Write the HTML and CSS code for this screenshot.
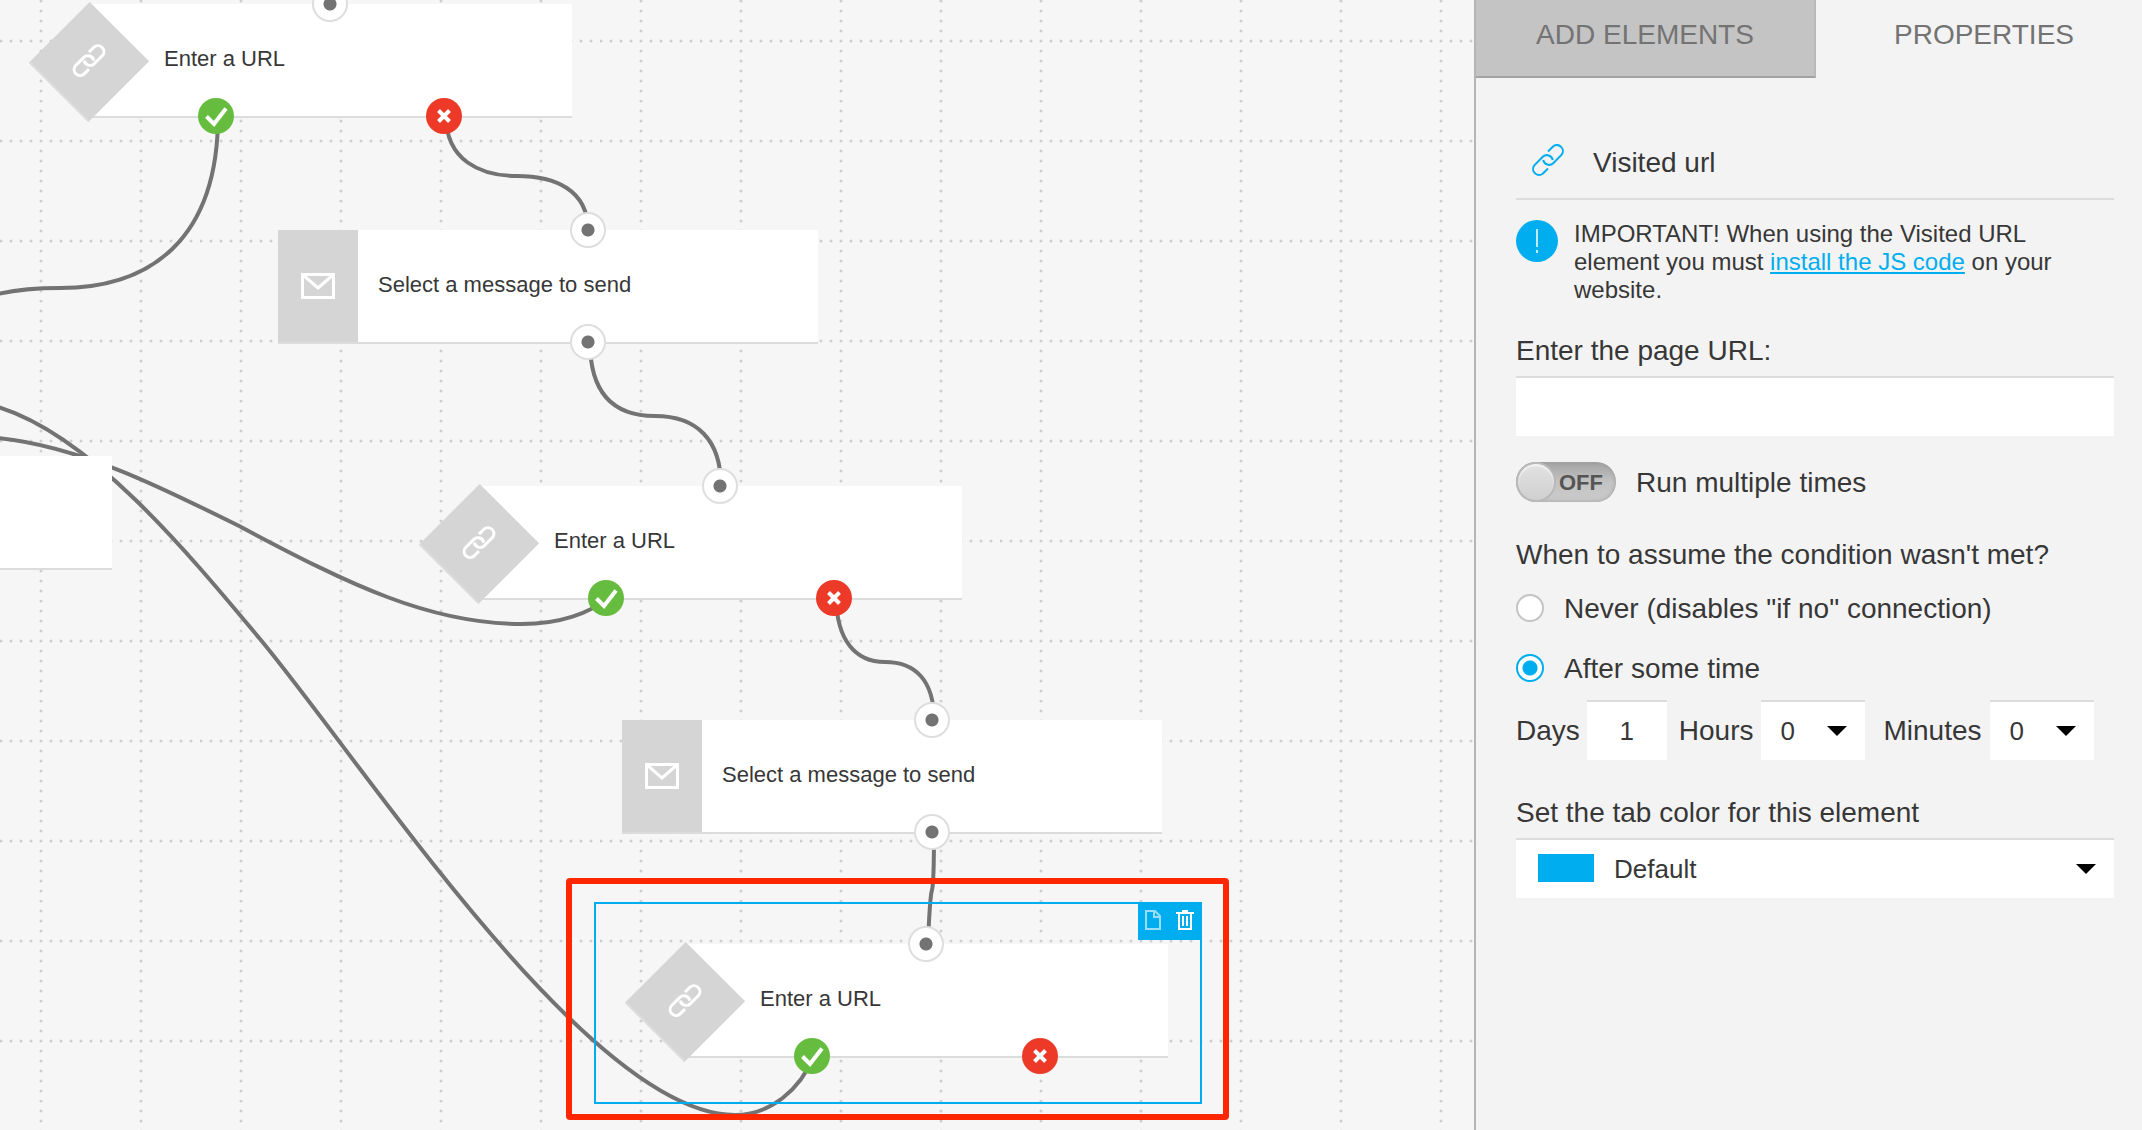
FILE: index.html
```
<!DOCTYPE html>
<html lang="en">
<head>
  <meta charset="UTF-8">
  <meta name="viewport" content="width=device-width, initial-scale=1.0">
  <title>Workflow editor</title>
  <link rel="stylesheet" href="styles.css">
</head>
<body>
  <svg class="sprite" aria-hidden="true">
    <symbol id="icon-link" viewBox="0 0 34 34">
      <path d="M17 8.500L22.300 3.300A6 6 0 0 1 30.700 11.700L22.200 20.200A6 6 0 0 1 12.200 17M17 25.500L11.700 30.700A6 6 0 0 1 3.300 22.300L11.800 13.800A6 6 0 0 1 21.800 17" fill="none" stroke="currentColor"/>
    </symbol>
    <symbol id="icon-mail" viewBox="0 0 34 26">
      <path d="M1.500 1.500H32.500V24.500H1.500ZM2 2L17 15L32 2" fill="none" stroke="currentColor" stroke-width="3"/>
    </symbol>
    <symbol id="icon-check" viewBox="0 0 36 36">
      <path d="M8.500 18.500L16 26L28 10.500" fill="none" stroke="currentColor" stroke-width="4"/>
    </symbol>
    <symbol id="icon-cross" viewBox="0 0 36 36">
      <path d="M12.500 12.500L23.500 23.500M23.500 12.500L12.500 23.500" fill="none" stroke="currentColor" stroke-width="4"/>
    </symbol>
  </svg>

  <div class="editor">
    <main class="canvas">
      <svg class="lines" width="100%" height="100%" aria-hidden="true">
        <defs>
          <pattern id="grid" width="100" height="100" patternUnits="userSpaceOnUse">
            <path d="M1 41H100M41 1V100" stroke="#cfcfcf" stroke-width="3" stroke-linecap="round" stroke-dasharray="0 10"/>
          </pattern>
        </defs>
        <rect width="100%" height="100%" fill="url(#grid)"/>
        <g fill="none" stroke="#737373" stroke-width="4">
          <path d="M218 116C218 240 150 288 60 288C35 288 15 290 -2 294"/>
          <path d="M446 116C446 160 480 176 517 176C555 176 588 190 588 230"/>
          <path d="M590 342C590 395 615 416 655 416C697 416 721 440 721 486"/>
          <path d="M836 598C837 640 855 662 885 662C915 662 934 680 934 720"/>
          <path d="M934 832C934 870 933 886 932 890C930 896 929 918 928 944"/>
          <path d="M-2 438C80 446 165 489 241 527C350 585 430 624 522 624C560 624 590 613 608 598"/>
          <path d="M-2 407C90 435 185 549 260 639C365 765 590 1115 735 1115C770 1115 800 1090 814 1056"/>
        </g>
      </svg>

      <div class="node node-start"></div>

      <div class="node node-url url-1">
        <div class="diamond"><svg><use href="#icon-link"/></svg></div>
        <span class="node-title">Enter a URL</span>
        <span class="port port-in"></span>
        <span class="port port-yes"><svg><use href="#icon-check"/></svg></span>
        <span class="port port-no"><svg><use href="#icon-cross"/></svg></span>
      </div>

      <div class="node node-message message-1">
        <div class="node-tab"><svg><use href="#icon-mail"/></svg></div>
        <span class="node-title">Select a message to send</span>
        <span class="port port-in"></span>
        <span class="port port-out"></span>
      </div>

      <div class="node node-url url-2">
        <div class="diamond"><svg><use href="#icon-link"/></svg></div>
        <span class="node-title">Enter a URL</span>
        <span class="port port-in"></span>
        <span class="port port-yes"><svg><use href="#icon-check"/></svg></span>
        <span class="port port-no"><svg><use href="#icon-cross"/></svg></span>
      </div>

      <div class="node node-message message-2">
        <div class="node-tab"><svg><use href="#icon-mail"/></svg></div>
        <span class="node-title">Select a message to send</span>
        <span class="port port-in"></span>
        <span class="port port-out"></span>
      </div>

      <div class="node node-url url-3">
        <div class="diamond"><svg><use href="#icon-link"/></svg></div>
        <span class="node-title">Enter a URL</span>
        <span class="port port-in"></span>
        <span class="port port-yes"><svg><use href="#icon-check"/></svg></span>
        <span class="port port-no"><svg><use href="#icon-cross"/></svg></span>
      </div>

      <div class="selection">
        <div class="tools">
          <button type="button" class="tool" aria-label="Duplicate">
            <svg class="icon-copy" width="16" height="20" viewBox="0 0 16 20"><path d="M1 1H10L15 6V19H1ZM9 1V7H15" fill="none" stroke="currentColor" stroke-width="2"/></svg>
          </button>
          <button type="button" class="tool" aria-label="Delete">
            <svg width="18" height="20" viewBox="0 0 18 20"><path d="M0 3H18M6 1H12M3 3V19H15V3M7 6V16M11 6V16" fill="none" stroke="currentColor" stroke-width="2"/></svg>
          </button>
        </div>
      </div>
      <div class="highlight"></div>
    </main>

    <aside class="sidebar">
      <div class="tabs">
        <button type="button" class="tab">ADD ELEMENTS</button>
        <button type="button" class="tab active">PROPERTIES</button>
      </div>

      <form class="panel">
        <div class="panel-header">
          <svg><use href="#icon-link"/></svg>
          <span>Visited url</span>
        </div>

        <div class="notice">
          <svg width="42" height="42" viewBox="0 0 42 42">
            <circle cx="21" cy="21" r="21" fill="#00aeef"/>
            <path d="M21 9V27M21 30V33" stroke="#fff" stroke-width="1.500"/>
          </svg>
          <p>IMPORTANT! When using the Visited URL element you must <a href="#">install the JS code</a> on your website.</p>
        </div>

        <label class="field-label" for="pageUrl">Enter the page URL:</label>
        <input class="field" type="text" id="pageUrl">

        <div class="toggle-row">
          <span class="toggle">
            <input type="checkbox" id="runMultiple">
            <span class="toggle-text">OFF</span>
          </span>
          <label for="runMultiple">Run multiple times</label>
        </div>

        <div class="section-label">When to assume the condition wasn't met?</div>
        <div class="radio-row radio-first">
          <input type="radio" name="condition" id="never">
          <label for="never">Never (disables "if no" connection)</label>
        </div>
        <div class="radio-row">
          <input type="radio" name="condition" id="after" checked>
          <label for="after">After some time</label>
        </div>

        <div class="time-row">
          <div class="time-item">
            <label for="days">Days</label>
            <input class="field days" type="text" id="days" value="1">
          </div>
          <div class="time-item time-hours">
            <label for="hours">Hours</label>
            <span class="select">
              <select class="field" id="hours"><option>0</option><option>1</option><option>2</option></select>
            </span>
          </div>
          <div class="time-item time-minutes">
            <label for="minutes">Minutes</label>
            <span class="select">
              <select class="field" id="minutes"><option>0</option><option>15</option><option>30</option></select>
            </span>
          </div>
        </div>

        <label class="color-label" for="tabColor">Set the tab color for this element</label>
        <span class="select color-select">
          <select class="field" id="tabColor"><option>Default</option></select>
        </span>
      </form>
    </aside>
  </div>
</body>
</html>
```
FILE: styles.css
```
*, *::before, *::after {
  box-sizing: border-box;
}

body {
  margin: 0;
  color: #373737;
  font-family: "Liberation Sans", Arial, sans-serif;
  font-size: 28px;
  line-height: 32px;
}

button, input, select {
  margin: 0;
  color: inherit;
  font-family: inherit;
}

.sprite {
  display: none;
}

.editor {
  display: flex;
  height: 100vh;
}

/* canvas */

.canvas {
  position: relative;
  flex: 1;
  min-width: 0;
  overflow: hidden;
  background: #f6f6f6;
}

.lines {
  position: absolute;
  top: 0;
  left: 0;
}

.node {
  position: absolute;
  display: flex;
  align-items: center;
  height: 114px;
  background: #fff;
  border-bottom: 2px solid #dcdcdc;
}

.node-start {
  top: 456px;
  left: 0;
  width: 112px;
}

.node-url {
  width: 483px;
  padding-left: 75px;
}

.node-message {
  width: 540px;
}

.url-1 {
  top: 4px;
  left: 89px;
}

.message-1 {
  top: 230px;
  left: 278px;
}

.url-2 {
  top: 486px;
  left: 479px;
}

.message-2 {
  top: 720px;
  left: 622px;
}

.url-3 {
  top: 944px;
  left: 685px;
}

.node-title {
  padding-bottom: 2px;
  font-size: 22px;
}

.node-tab {
  display: flex;
  align-items: center;
  justify-content: center;
  align-self: stretch;
  width: 80px;
  margin-right: 20px;
  background: #d5d5d5;
  color: #fff;
}

.node-tab svg {
  width: 34px;
  height: 26px;
}

.diamond {
  position: absolute;
  top: 15px;
  left: -42px;
  display: flex;
  align-items: center;
  justify-content: center;
  width: 84px;
  height: 86px;
  padding-right: 3px;
  background: #d5d5d5;
  border-bottom: 2px solid #dcdcdc;
  color: #fff;
  transform: rotate(45deg);
}

.diamond svg {
  width: 34px;
  height: 34px;
  stroke-width: 3px;
  transform: rotate(-45deg);
}

.port {
  position: absolute;
  width: 36px;
  height: 36px;
  border-radius: 50%;
  color: #fff;
}

.port svg {
  display: block;
  width: 36px;
  height: 36px;
}

.port-in, .port-out {
  left: 223px;
  border: 2px solid #dedede;
  background: radial-gradient(circle, #737373 6px, #fff 7px);
}

.node-message .port-in, .node-message .port-out {
  left: 292px;
}

.port-in {
  top: -18px;
}

.port-out, .port-yes, .port-no {
  top: 94px;
}

.port-yes {
  left: 109px;
  background: #66bc3f;
}

.port-no {
  left: 337px;
  background: #ed3928;
}

.selection {
  position: absolute;
  top: 902px;
  left: 594px;
  width: 608px;
  height: 202px;
  border: 2px solid #00aeef;
}

.tools {
  position: absolute;
  top: -2px;
  right: -2px;
  display: flex;
  width: 64px;
  height: 38px;
  background: #00aeef;
}

.tool {
  flex: 1;
  display: flex;
  align-items: center;
  justify-content: center;
  padding: 0 2px 2px 0;
  border: none;
  background: none;
  color: #fff;
  cursor: pointer;
}

.icon-copy {
  opacity: 0.6;
}

.highlight {
  position: absolute;
  top: 878px;
  left: 566px;
  width: 663px;
  height: 242px;
  border: 6px solid #ff2600;
  border-radius: 4px;
  pointer-events: none;
}

/* sidebar */

.sidebar {
  flex: 0 0 668px;
  background: #f3f3f3;
  border-left: 2px solid #b5b5b5;
}

.tabs {
  display: flex;
}

.tab {
  width: 340px;
  height: 78px;
  padding: 0 0 6px;
  border: none;
  border-right: 2px solid #b9b9b9;
  border-bottom: 2px solid #a3a3a3;
  background: #c4c4c4;
  color: #737373;
  font-size: 28px;
  cursor: pointer;
}

.tab.active {
  flex: 1;
  width: auto;
  padding-left: 12px;
  border-color: transparent;
  background: none;
}

.panel {
  padding: 65px 28px 0 40px;
}

.panel-header {
  display: flex;
  align-items: flex-start;
  gap: 28px;
  padding: 0 0 15px 15px;
  border-bottom: 2px solid #dcdcdc;
  line-height: 40px;
}

.panel-header svg {
  width: 34px;
  height: 34px;
  color: #00aeef;
  stroke-width: 2px;
}

.notice {
  display: flex;
  gap: 16px;
  margin: 20px 0 31px;
  font-size: 24px;
  line-height: 28px;
}

.notice svg {
  flex: none;
}

.notice p {
  margin: 0;
}

.notice a {
  color: #00aeef;
  text-decoration-thickness: 2px;
  text-underline-offset: 2px;
}

.field-label {
  display: block;
  margin-bottom: 9px;
}

.field {
  display: block;
  width: 100%;
  height: 60px;
  padding: 0 20px;
  border: none;
  border-top: 2px solid #dcdcdc;
  border-radius: 0;
  background: #fff;
  font-size: 26px;
}

.toggle-row {
  display: flex;
  align-items: center;
  gap: 20px;
  margin: 26px 0 37px;
}

.toggle-row label, .radio-row label, .time-item label {
  padding-top: 2px;
}

.toggle {
  position: relative;
  display: flex;
}

.toggle input {
  appearance: none;
  width: 100px;
  height: 40px;
  border-radius: 20px;
  background: linear-gradient(#a3a3a3, #c3c3c3 50%, #cbcbcb);
  box-shadow: inset 0 0 4px #999;
  cursor: pointer;
}

.toggle input::before {
  content: "";
  display: block;
  width: 40px;
  height: 40px;
  border: 2px solid #b9b9b9;
  border-radius: 50%;
  background: linear-gradient(#e2e2e2, #d0d0d0);
  box-shadow: inset 0 2px 2px #f6f6f6;
}

.toggle-text {
  position: absolute;
  top: 5px;
  left: 43px;
  color: #555;
  font-size: 22px;
  font-weight: bold;
  pointer-events: none;
}

.radio-row {
  display: flex;
  align-items: center;
  gap: 20px;
  height: 32px;
  margin-bottom: 16px;
}

.radio-first {
  margin: 21px 0 28px;
}

.radio-row input {
  appearance: none;
  width: 28px;
  height: 28px;
  border: 2px solid #c4c4c4;
  border-radius: 50%;
  background: #fff;
}

.radio-row input:checked {
  border-color: #00aeef;
  background: radial-gradient(circle, #00aeef 7px, #fff 8px);
}

.time-row, .time-item {
  display: flex;
  align-items: center;
}

.time-item {
  gap: 7px;
}

.time-hours {
  margin-left: 12px;
}

.time-minutes {
  gap: 8px;
  margin-left: 19px;
}

.days {
  width: 80px;
  text-align: center;
}

.select {
  position: relative;
  display: block;
  width: 104px;
}

.select select {
  appearance: none;
}

.select::after {
  content: "";
  position: absolute;
  top: 26px;
  right: 18px;
  border: 10px solid transparent;
  border-top-color: #000;
  border-bottom: none;
  pointer-events: none;
}

.color-label {
  display: block;
  margin: 37px 0 9px;
}

.color-select {
  width: 100%;
}

.color-select select {
  padding-left: 98px;
}

.color-select::before {
  content: "";
  position: absolute;
  top: 16px;
  left: 22px;
  width: 56px;
  height: 28px;
  background: #00aeef;
}
```
